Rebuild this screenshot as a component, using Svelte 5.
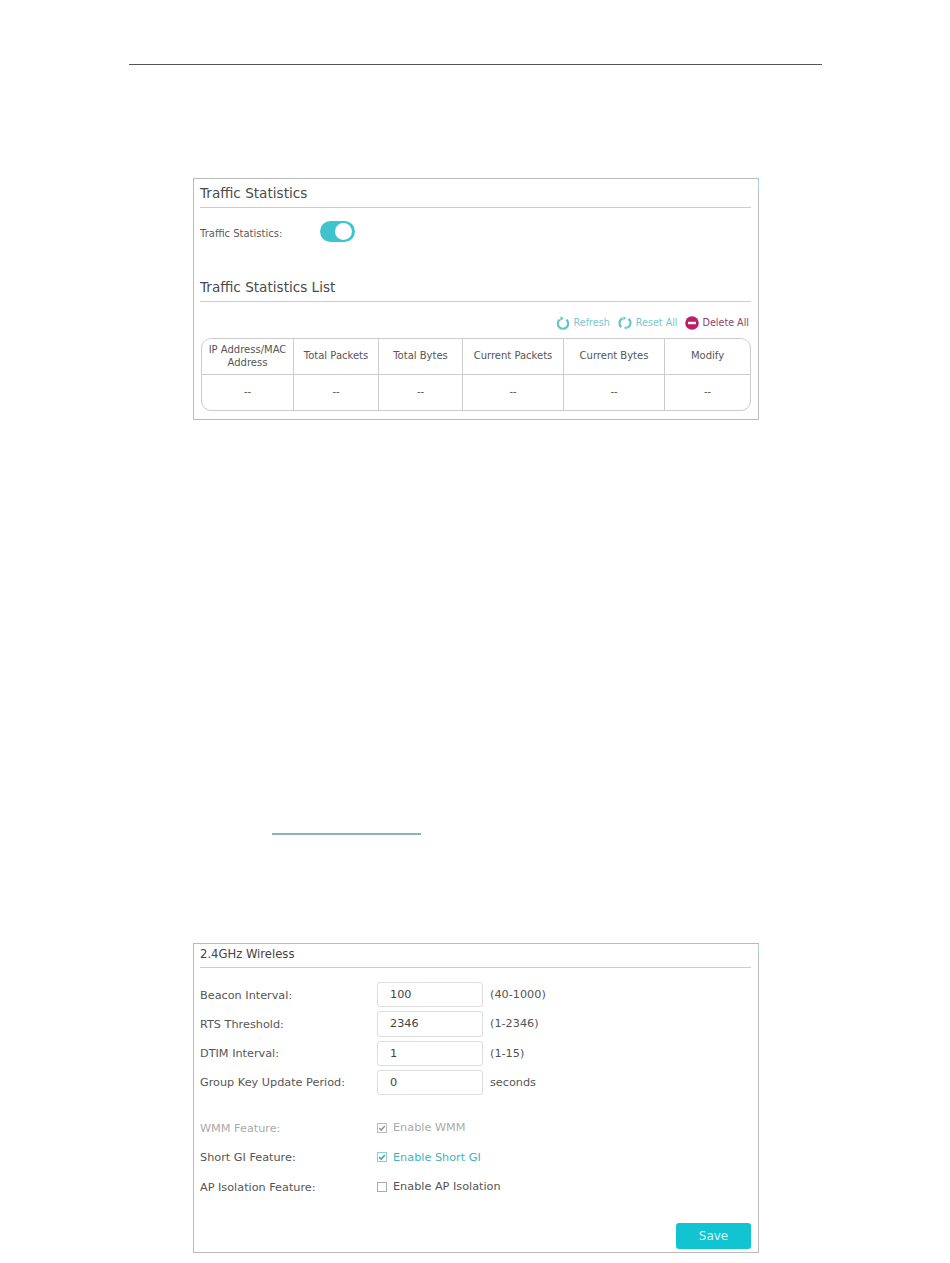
<script>
  const cols = ['IP Address/MAC Address', 'Total Packets', 'Total Bytes', 'Current Packets', 'Current Bytes', 'Modify'];
  const fields = [
    { label: 'Beacon Interval:', value: '100', hint: '(40-1000)' },
    { label: 'RTS Threshold:', value: '2346', hint: '(1-2346)' },
    { label: 'DTIM Interval:', value: '1', hint: '(1-15)' },
    { label: 'Group Key Update Period:', value: '0', hint: 'seconds' }
  ];
  const checks = [
    { label: 'WMM Feature:', text: 'Enable WMM', state: 'disabled', on: true },
    { label: 'Short GI Feature:', text: 'Enable Short GI', state: 'active', on: true },
    { label: 'AP Isolation Feature:', text: 'Enable AP Isolation', state: '', on: false }
  ];
</script>

<div class="page">
  <div class="top-rule"></div>

  <section class="panel first">
    <i class="mark"></i>
    <h2>Traffic Statistics</h2>
    <div class="toggle-row">
      <span class="toggle-label">Traffic Statistics:</span>
      <span class="toggle"><span class="knob"></span></span>
    </div>
    <h2 class="second">Traffic Statistics List</h2>
    <div class="actions">
      <span class="action teal">
        <svg viewBox="0 0 14 14" width="14" height="14"><path d="M3.6 3.6a5.2 5.2 0 1 0 6.8 0" fill="none" stroke="#63c4c8" stroke-width="2.2"/><path d="M4.4 0.2 L7.8 2.4 L4.4 4.8Z" fill="#63c4c8"/></svg>
        Refresh
      </span>
      <span class="action teal">
        <svg viewBox="0 0 14 14" width="14" height="14"><path d="M3.4 11.2a5.4 5.4 0 0 1 1.2-9M10.6 2.8a5.4 5.4 0 0 1-1.2 9" fill="none" stroke="#63c4c8" stroke-width="2.2"/><path d="M5.4 0.2V4.4L8 2ZM8.6 13.8V9.6L6 12Z" fill="#63c4c8"/></svg>
        Reset All
      </span>
      <span class="action red">
        <svg viewBox="0 0 14 14" width="14" height="14"><circle cx="7" cy="7" r="6.8" fill="#bd1e68"/><rect x="3" y="5.8" width="8" height="2.4" fill="#fff"/></svg>
        Delete All
      </span>
    </div>
    <div class="table">
      {#each cols as c}<div class="th">{c}</div>{/each}
      {#each cols as c}<div class="td">--</div>{/each}
    </div>
  </section>

  <div class="link-rule"></div>

  <section class="panel wireless">
    <i class="mark"></i>
    <h3>2.4GHz Wireless</h3>
    <div class="fields">
      {#each fields as f}
        <div class="row">
          <span class="label">{f.label}</span>
          <span class="input">{f.value}</span>
          <span class="hint">{f.hint}</span>
        </div>
      {/each}
    </div>
    <div class="checks">
      {#each checks as c}
        <div class="row check {c.state}">
          <span class="label">{c.label}</span>
          <span class="box">
            {#if c.on}<svg viewBox="0 0 10 10" width="8" height="8"><path d="M1.5 5 L4 7.5 L8.5 2.5" fill="none" stroke="currentColor" stroke-width="2"/></svg>{/if}
          </span>
          <span class="check-text">{c.text}</span>
        </div>
      {/each}
    </div>
    <div class="footer"><button class="save">Save</button></div>
  </section>
</div>

<style>
  :global(body) { margin: 0; background: #fff; }
  .page {
    width: 950px; height: 1263px; box-sizing: border-box; overflow: hidden;
    padding-top: 64px;
    font-family: "DejaVu Sans", Verdana, sans-serif;
    color: #555;
    display: flex; flex-direction: column;
  }
  .top-rule { height: 1px; background: #555; margin: 0 128px 0 129px; }
  .panel {
    position: relative; box-sizing: border-box;
    width: 566px; margin-left: 193px;
    border: 1px solid #bbb;
    padding: 0 7px 0 6px;
  }
  .first { margin-top: 113px; height: 242px; }
  .mark { position: absolute; right: -1px; top: 1px; width: 1px; height: 9px; background: #a8dadc; }
  h2 {
    margin: 0; height: 28px; line-height: 28px;
    font-size: 13.6px; font-weight: 400; color: #4a4a4a;
    border-bottom: 1px solid #ccc;
  }
  .second { margin-top: 18px; }
  .toggle-row { display: flex; align-items: center; height: 47px; }
  .toggle-label { width: 120px; font-size: 10px; color: #5a5a5a; padding-top: 4px; }
  .toggle {
    width: 35px; height: 21px; border-radius: 11px; background: #3fc3cc;
    display: flex; align-items: center; justify-content: flex-end; padding-right: 3px; box-sizing: border-box;
  }
  .knob { width: 17px; height: 17px; border-radius: 50%; background: #fff; }
  .actions {
    display: flex; justify-content: flex-end; align-items: center; gap: 8px;
    height: 31px; padding-top: 5px; padding-right: 2px; font-size: 9.6px;
  }
  .action { display: flex; align-items: center; gap: 4px; }
  .teal { color: #79c6ca; }
  .red { color: #8f3f68; margin-left: -1px; }
  .table {
    margin-left: 1px; width: 550px; box-sizing: border-box;
    display: grid; grid-template-columns: 92px 85px 84px 101px 101px 1fr;
    grid-template-rows: 36px 35px;
    border: 1px solid #ccc; border-radius: 10px;
    font-size: 10px; color: #555;
  }
  .th, .td {
    display: flex; align-items: center; justify-content: center; text-align: center;
    border-right: 1px solid #ccc; line-height: 13px; padding: 0 6px 2px;
  }
  .th { border-bottom: 1px solid #ccc; }
  .th:nth-child(6n), .td:nth-child(6n) { border-right: 0; }
  .link-rule { height: 2px; width: 149px; margin: 413px 0 0 272px; background: #86b7b0; }
  .wireless { margin-top: 108px; height: 310px; }
  h3 {
    margin: 0; height: 23px; line-height: 20px; font-size: 11.6px; font-weight: 400; color: #444;
    border-bottom: 1px solid #ccc;
  }
  .fields { display: flex; flex-direction: column; gap: 4px; margin-top: 14px; }
  .row { display: flex; align-items: center; font-size: 11.25px; color: #555; }
  .label { width: 177px; flex: none; padding-top: 1px; }
  .input {
    box-sizing: border-box; width: 106px; height: 25.25px; line-height: 24px;
    border: 1px solid #ddd; border-radius: 3px; padding-left: 12px; color: #444;
  }
  .hint { margin-left: 7px; }
  .checks { display: flex; flex-direction: column; gap: 12px; margin-top: 24px; }
  .check { height: 17.5px; }
  .box {
    box-sizing: border-box; width: 10px; height: 10px; border: 1px solid #aaa;
    display: flex; align-items: center; justify-content: center; color: #777;
  }
  .check-text { margin-left: 6px; }
  .disabled .label, .disabled .check-text { color: #aaa; }
  .disabled .box { border-color: #bbb; color: #999; }
  .active .check-text { color: #3fb4ba; }
  .active .box { border-color: #8fd0d3; color: #3fa5aa; }
  .footer { display: flex; justify-content: flex-end; margin-top: 27px; }
  .save {
    width: 75px; height: 26px; border: 0; border-radius: 3px; background: #12c4d2;
    color: #d8f4f7; font: 400 12px "DejaVu Sans", sans-serif; padding: 0;
  }
</style>
